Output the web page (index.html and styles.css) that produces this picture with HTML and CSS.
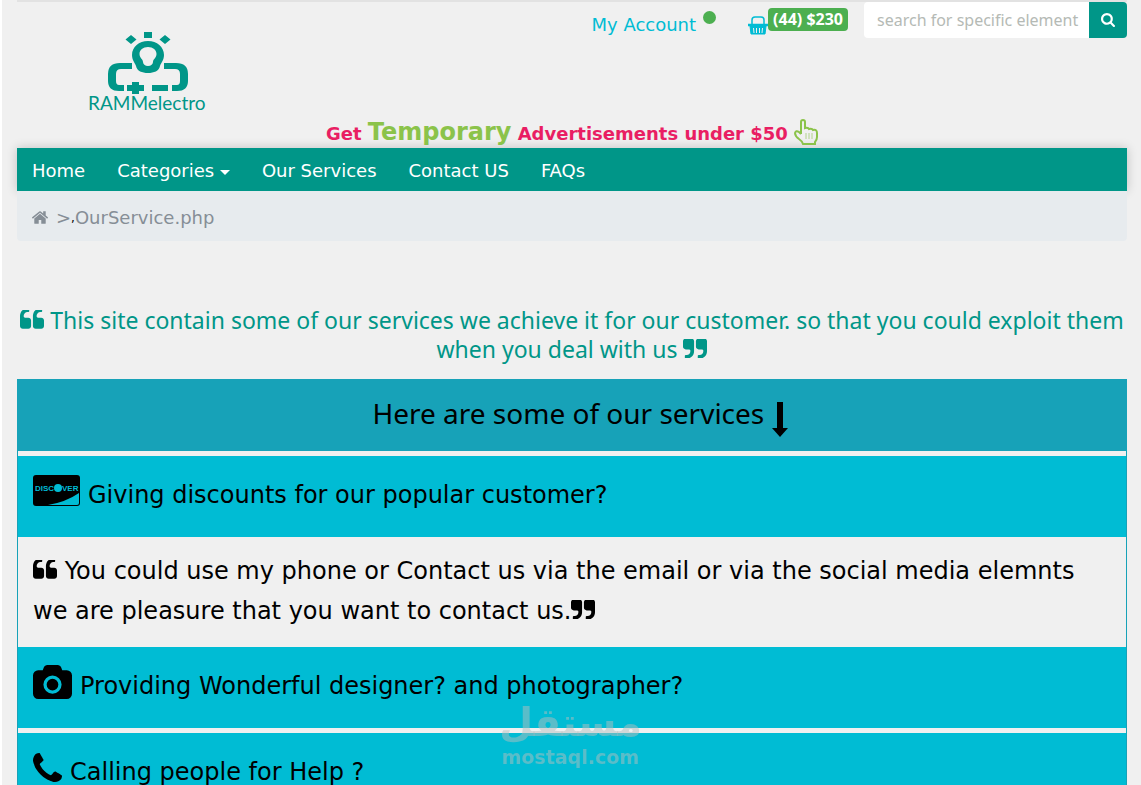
FILE: index.html
```
<!DOCTYPE html>
<html lang="en">
<head>
    <meta charset="UTF-8">
    <meta name="viewport" content="width=device-width, initial-scale=1.0">
    <title>RAMMelectro - Our Services</title>
    <link rel="stylesheet" href="styles.css">
</head>
<body>
    <!-- Shared icons -->
    <svg class="sprite" aria-hidden="true">
        <symbol id="quote-left" viewBox="64 256 1664 1280">
            <path d="M832 960v384q0 80-56 136t-136 56h-384q-80 0-136-56t-56-136v-704q0-104 40.5-198.5t109.5-163.5 163.5-109.5 198.5-40.5h64q26 0 45 19t19 45v128q0 26-19 45t-45 19h-64q-106 0-181 75t-75 181v32q0 40 28 68t68 28h224q80 0 136 56t56 136zm896 0v384q0 80-56 136t-136 56h-384q-80 0-136-56t-56-136v-704q0-104 40.5-198.5t109.5-163.5 163.5-109.5 198.5-40.5h64q26 0 45 19t19 45v128q0 26-19 45t-45 19h-64q-106 0-181 75t-75 181v32q0 40 28 68t68 28h224q80 0 136 56t56 136z"/>
        </symbol>
        <symbol id="quote-right" viewBox="64 256 1664 1280">
            <path d="M832 448v704q0 104-40.5 198.5t-109.5 163.5-163.5 109.5-198.5 40.5h-64q-26 0-45-19t-19-45v-128q0-26 19-45t45-19h64q106 0 181-75t75-181v-32q0-40-28-68t-68-28h-224q-80 0-136-56t-56-136v-384q0-80 56-136t136-56h384q80 0 136 56t56 136zm896 0v704q0 104-40.5 198.5t-109.5 163.5-163.5 109.5-198.5 40.5h-64q-26 0-45-19t-19-45v-128q0-26 19-45t45-19h64q106 0 181-75t75-181v-32q0-40-28-68t-68-28h-224q-80 0-136-56t-56-136v-384q0-80 56-136t136-56h384q80 0 136 56t56 136z" transform="translate(0 -64)"/>
        </symbol>
    </svg>

    <div class="container">
        <header>
            <div class="top">
                <a class="logo" href="#" aria-label="RAMMelectro">
                    <svg width="124" height="84" viewBox="0 0 124 84">
                        <g fill="#009688">
                            <path d="M56 1h8v6h-8zM43 4l5.500 4.500-5.500 4.500-5.500-4.500zM77 4l5.500 4.500-5.500 4.500-5.500-4.500z"/>
                            <path fill-rule="evenodd" d="M60 10c9 0 16 6 16 14 0 5-3 8-4 11-1 5-6 7-12 7s-11-2-12-7c-1-3-4-6-4-11 0-8 7-14 16-14zm0 6c-5 0-8.500 3-8.500 7 0 4 3.500 5 3.500 8 0 2 2 4 5 4s5-2 5-4c0-3 3.500-4 3.500-8 0-4-3.500-7-8.500-7z"/>
                            <path d="M44 32H32q-12 0-12 11v7q0 10 11 10h5v-6h-5q-3 0-3-4v-7q0-5 5-5h11zM76 32h12q12 0 12 11v7q0 10-11 10h-5v-6h5q3 0 3-4v-7q0-5-5-5H76zM64 54h16v6H64zM44 51h7v3h5v6h-5v3h-7v-3h-5v-6h5z"/>
                        </g>
                        <text x="0" y="79" class="logo-text">RAMMelectro</text>
                    </svg>
                </a>

                <a class="account" href="#">My Account <span class="online"></span></a>

                <a class="cart" href="#">
                    <svg width="20" height="20" viewBox="0 0 20 20" fill="none" stroke="#00bcd4">
                        <path d="M4 8V4q0-3 3-3h6q3 0 3 3v4" stroke-width="1.500"/>
                        <path d="M0 9h20" stroke-width="2.500"/>
                        <path d="M2 10l1 8h14l1-8z" fill="#00bcd4"/>
                        <path d="M5.500 12l.5 5M8.500 12v5M11.500 12v5M14.500 12l-.5 5" stroke="#f0f0f0"/>
                    </svg>
                    <span class="badge">(44) $230</span>
                </a>

                <form class="search">
                    <input type="text" placeholder="search for specific element" aria-label="Search">
                    <button type="submit" aria-label="Search">
                        <svg width="14" height="14" viewBox="64 128 1664 1664" fill="#fff">
                            <path d="M1216 832q0-185-131.500-316.500t-316.500-131.500-316.500 131.500-131.500 316.500 131.500 316.500 316.500 131.500 316.500-131.500 131.500-316.500zm512 832q0 52-38 90t-90 38q-54 0-90-38l-343-342q-179 124-399 124-143 0-273.500-55.500t-225-150-150-225-55.500-273.500 55.500-273.500 150-225 225-150 273.500-55.500 273.500 55.500 225 150 150 225 55.500 273.500q0 220-124 399l343 343q37 37 37 90z"/>
                        </svg>
                    </button>
                </form>
            </div>

            <p class="promo">Get <span>Temporary</span> Advertisements under $50
                <svg width="24" height="26" viewBox="0 0 24 26" fill="none" stroke="#8bc34a" stroke-width="2">
                    <path d="M7 15V3q0-2 2-2t2 2v6q3-1 4 1 3-1 4 1 4-1 4 3v4q0 3-2 5v2H9q-1-3-4-5-4-3-4-6 1-3 4-1l2 2"/>
                    <path d="M12 14v6M15 14v6M18 14v6" stroke-width="1" opacity=".6"/>
                </svg>
            </p>
        </header>

        <!-- Main menu -->
        <nav class="menu">
            <a href="#">Home</a>
            <a href="#">Categories <span class="caret"></span></a>
            <a href="#">Our Services</a>
            <a href="#">Contact US</a>
            <a href="#">FAQs</a>
        </nav>

        <div class="breadcrumb">
            <a href="#" aria-label="Home">
                <svg width="16" height="13" viewBox="89 253 1614 1283" fill="#868e96">
                    <path d="M1472 992v480q0 26-19 45t-45 19h-384v-384h-256v384h-384q-26 0-45-19t-19-45v-480q0-1 .5-3t.5-3l575-474 575 474q1 2 1 6zm223-69l-62 74q-8 9-21 11h-3q-13 0-21-7l-692-577-692 577q-12 8-24 7-13-2-21-11l-62-74q-8-10-7-23.500t11-21.500l719-599q32-26 76-26t76 26l244 204v-195q0-14 9-23t23-9h192q14 0 23 9t9 23v408l219 182q10 8 11 21.500t-7 23.500z"/>
                </svg>
            </a>
            <span class="sep">&gt;</span><span class="comma">,</span><span>OurService.php</span>
        </div>

        <p class="intro">
            <svg class="quote"><use href="#quote-left"/></svg>
            This site contain some of our services we achieve it for our customer. so that you could exploit them when you deal with us
            <svg class="quote"><use href="#quote-right"/></svg>
        </p>

        <!-- Services list -->
        <section class="services">
            <h2>Here are some of our services
                <svg width="16" height="35" viewBox="0 0 16 35"><path d="M5 0h6v26h5l-8 9-8-9h5z"/></svg>
            </h2>

            <button type="button" class="question">
                <svg width="47" height="31" viewBox="0 0 47 31">
                    <rect width="47" height="31" rx="3"/>
                    <path d="M46 18v10q0 2-2 2H15q18-3 31-12z" fill="#00bcd4"/>
                    <text x="2" y="16" class="card-text" fill="#00bcd4">DISC</text>
                    <circle cx="25" cy="13" r="4" fill="#00bcd4"/>
                    <text x="29" y="16" class="card-text" fill="#00bcd4">VER</text>
                </svg>
                Giving discounts for our popular customer?
            </button>
            <p class="answer">
                <svg class="quote"><use href="#quote-left"/></svg>
                You could use my phone or Contact us via the email or via the social media elemnts we are pleasure that you want to contact us.<svg class="quote"><use href="#quote-right"/></svg>
            </p>

            <button type="button" class="question">
                <svg width="39" height="34" viewBox="-64 0 1920 1664">
                    <path d="M896 672q119 0 203.500 84.500t84.500 203.500-84.500 203.500-203.500 84.500-203.500-84.500-84.500-203.500 84.500-203.500 203.500-84.500zm704-416q106 0 181 75t75 181v896q0 106-75 181t-181 75h-1408q-106 0-181-75t-75-181v-896q0-106 75-181t181-75h224l51-136q19-49 69.500-84.500t103.500-35.500h512q53 0 103.500 35.500t69.500 84.500l51 136h224zm-704 1152q185 0 316.500-131.500t131.500-316.500-131.500-316.500-316.500-131.500-316.500 131.500-131.500 316.500 131.500 316.500 316.500 131.500z"/>
                </svg>
                Providing Wonderful designer? and photographer?
            </button>

            <button type="button" class="question">
                <svg width="29" height="29" viewBox="192 128 1408 1408">
                    <path d="M1600 1240q0 27-10 70.500t-21 68.500q-21 50-122 106-94 51-186 51-27 0-52.500-3.500t-57.500-12.500-47.500-14.500-55.500-20.500-49-18q-98-35-175-83-128-79-264.500-215.500t-215.500-264.500q-48-77-83-175-3-9-18-49t-20.500-55.500-14.500-47.500-12.500-57.500-3.500-52.500q0-92 51-186 56-101 106-122 25-11 68.500-21t70.500-10q14 0 21 3 18 6 53 76 11 19 30 54t35 63.500 31 53.500q3 4 17.500 25t21.500 35.500 7 28.500q0 20-28.500 50t-62 55-62 53-28.500 46q0 9 5 22.500t8.500 20.500 14 24 11.500 19q76 137 174 235t235 174q2 1 19 11.500t24 14 20.500 8.500 22.500 5q18 0 46-28.500t53-62 55-62 50-28.500q14 0 28.500 7t35.500 21.500 25 17.500q25 15 53.500 31t63.500 35 54 30q70 35 76 53 3 7 3 21z"/>
                </svg>
                Calling people for Help ?
            </button>
        </section>
    </div>

    <div class="watermark">
        <span lang="ar">مستقل</span>
        <span>mostaql.com</span>
    </div>
</body>
</html>
```
FILE: styles.css
```
* {
    box-sizing: border-box;
}

body {
    margin: 0;
    border-left: 2px solid #fff;
    background-color: #f0f0f0;
    font-family: "DejaVu Sans", Verdana, sans-serif;
    font-size: 18px;
    color: #000;
}

a {
    text-decoration: none;
}

.sprite {
    display: none;
}

.container {
    padding: 0 14px 0 15px;
}

header {
    border-top: 2px solid #e2e2e2;
}

.top {
    display: flex;
    align-items: flex-start;
    height: 114px;
}

.logo {
    margin: 29px auto 0 71px;
}

.logo svg {
    display: block;
}

.logo-text {
    font-family: Lato, sans-serif;
    font-size: 19px;
    fill: #009688;
}

.account {
    display: flex;
    gap: 7px;
    margin: 9px 32px 0 0;
    line-height: 28px;
    color: #00bcd4;
}

.online {
    width: 13px;
    height: 13px;
    border-radius: 50%;
    background-color: #4caf50;
}

.cart {
    display: flex;
    align-items: flex-start;
    margin-right: 16px;
    padding-top: 6px;
}

.cart svg {
    margin-top: 8px;
}

.badge {
    padding: 0 5px;
    border-radius: 4px;
    background-color: #4caf50;
    color: #fff;
    font-family: "Noto Sans", sans-serif;
    font-size: 16px;
    font-weight: bold;
    line-height: 23px;
}

.search {
    display: flex;
    width: 263px;
    height: 36px;
}

.search input {
    flex: 1;
    min-width: 0;
    padding: 0 8px 0 13px;
    border: 0;
    border-radius: 4px 0 0 4px;
    background-color: #fff;
    font-family: "Noto Sans", sans-serif;
    font-size: 16px;
}

.search input::placeholder {
    color: #b5bab5;
}

.search button {
    width: 38px;
    padding: 2px 0 0;
    border: 0;
    border-radius: 0 4px 4px 0;
    background-color: #009688;
}

.promo {
    height: 32px;
    margin: 0;
    text-align: center;
    font-weight: bold;
    line-height: 32px;
    color: #e91e63;
}

.promo span {
    font-size: 24px;
    color: #8bc34a;
}

.promo svg {
    vertical-align: -5px;
}

/* Menu */
.menu {
    display: flex;
    gap: 32px;
    height: 43px;
    padding: 0 15px;
    background-color: #009688;
    box-shadow: 0 0 10px rgba(0, 0, 0, 0.2);
    line-height: 45px;
}

.menu a {
    color: #fff;
}

.caret {
    display: inline-block;
    border: 5px solid transparent;
    border-top-color: #fff;
    border-bottom: 0;
    vertical-align: middle;
}

.breadcrumb {
    display: flex;
    height: 50px;
    padding: 0 15px;
    border-radius: 0 0 4px 4px;
    background-color: #e7ebee;
    color: #868e96;
    line-height: 54px;
}

.sep {
    margin-left: 8px;
}

.comma {
    font-size: 12px;
    color: #000;
}

/* Services */
.intro {
    margin: 65px 0 15px;
    text-align: center;
    font-family: "Noto Sans", "Segoe UI", sans-serif;
    font-size: 23px;
    line-height: 29px;
    color: #009688;
}

.quote {
    width: 24px;
    height: 19px;
    fill: currentColor;
}

.services {
    border: 1px solid #17a2b8;
}

.services h2 {
    height: 71px;
    margin: 0;
    padding-left: 16px;
    background-color: #17a2b8;
    text-align: center;
    font-family: "Noto Sans", "Segoe UI", sans-serif;
    font-size: 28px;
    font-weight: normal;
    line-height: 66px;
}

.services h2 svg {
    vertical-align: -13px;
}

.question {
    display: flex;
    align-items: center;
    gap: 8px;
    width: 100%;
    height: 81px;
    margin-top: 5px;
    padding: 0 15px 4px;
    border: 0;
    background-color: #00bcd4;
    color: #000;
    font-family: inherit;
    font-size: 24px;
    text-align: left;
}

.question svg {
    margin-bottom: 8px;
}

.answer {
    margin: 0;
    padding: 14px 15px 16px;
    font-size: 24px;
    line-height: 40px;
}

.answer + .question {
    margin-top: 0;
}

.card-text {
    font-family: "Liberation Sans", sans-serif;
    font-size: 8px;
    font-weight: bold;
}

.watermark {
    position: fixed;
    bottom: 16px;
    left: 50%;
    transform: translateX(-50%);
    text-align: center;
    font-weight: bold;
    font-size: 19px;
    line-height: 24px;
    color: rgba(180, 190, 190, 0.5);
}

.watermark span {
    display: block;
}

.watermark span:first-child {
    font-size: 39px;
    line-height: 44px;
}
```
